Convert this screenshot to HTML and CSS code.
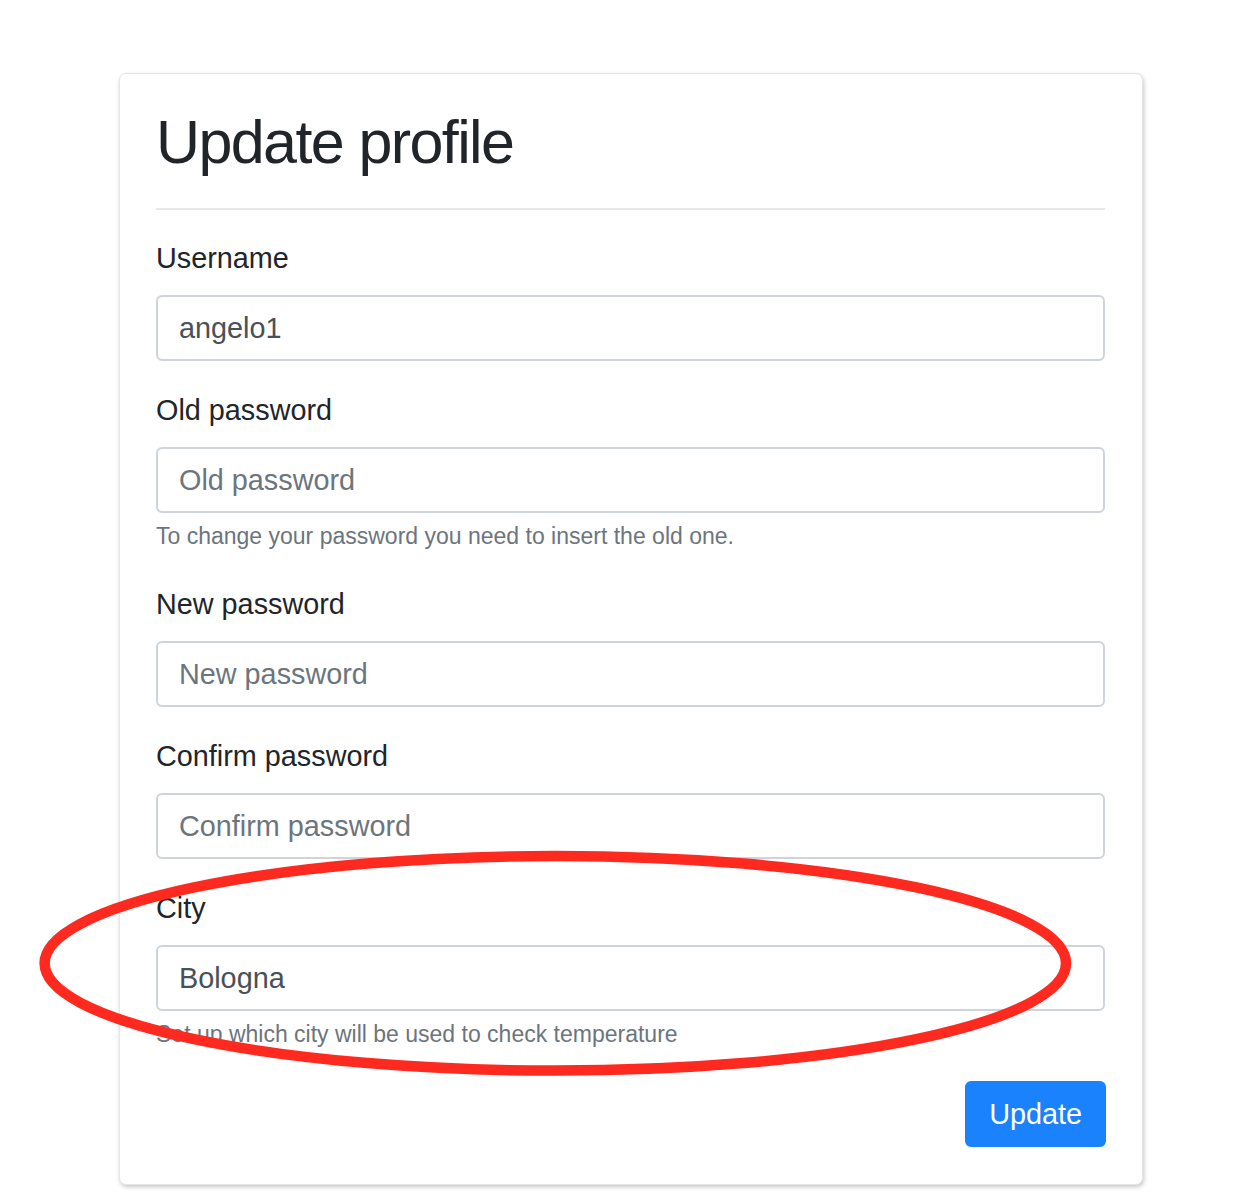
FILE: index.html
```html
<!DOCTYPE html>
<html lang="en">
<head>
<meta charset="utf-8">
<title>Update profile</title>
<link rel="stylesheet" href="styles.css">
</head>
<body>
<div class="page">
  <div class="card">
    <h1 class="title">Update profile</h1>
    <hr class="divider">
    <form class="form">
      <div class="group">
        <label class="label" for="username">Username</label>
        <input class="control" id="username" type="text" value="angelo1">
      </div>
      <div class="group">
        <label class="label" for="oldpw">Old password</label>
        <input class="control" id="oldpw" type="password" placeholder="Old password">
        <small class="help">To change your password you need to insert the old one.</small>
      </div>
      <div class="group">
        <label class="label" for="newpw">New password</label>
        <input class="control" id="newpw" type="password" placeholder="New password">
      </div>
      <div class="group">
        <label class="label" for="confpw">Confirm password</label>
        <input class="control" id="confpw" type="password" placeholder="Confirm password">
      </div>
      <div class="group">
        <label class="label" for="city">City</label>
        <input class="control" id="city" type="text" value="Bologna">
        <small class="help">Set up which city will be used to check temperature</small>
      </div>
      <div class="actions">
        <button class="btn" type="button">Update</button>
      </div>
    </form>
  </div>
  <svg class="annotation" width="1254" height="1202" viewBox="0 0 1254 1202" aria-hidden="true">
    <ellipse cx="555.3" cy="963.3" rx="510.7" ry="107.3" fill="none" stroke="#fe2a20" stroke-width="10.5"/>
  </svg>
</div>
</body>
</html>
```

FILE: styles.css
```css
html, body {
  margin: 0;
  padding: 0;
  background: #ffffff;
}

body {
  font-family: "Liberation Sans", Arial, Helvetica, sans-serif;
  color: #212529;
}

.page {
  position: relative;
  width: 1254px;
  height: 1202px;
  padding: 73px 0 0 119px;
  box-sizing: border-box;
}

.card {
  width: 1024px;
  box-sizing: border-box;
  border: 1px solid #e6e6e6;
  border-radius: 7px;
  box-shadow: 1px 2px 4px rgba(0, 0, 0, 0.22);
  padding: 36px 37px 37px 36px;
  background: #fff;
}

.title {
  margin: 0;
  font-size: 61px;
  line-height: 64px;
  font-weight: 400;
  letter-spacing: -1.6px;
  color: #212529;
}

.divider {
  margin: 34px 0 27px 0;
  border: 0;
  border-top: 2px solid #e7e7e7;
  height: 0;
}

.form {
  margin: 0;
}

.group {
  display: flex;
  flex-direction: column;
  margin-bottom: 28px;
}

.label {
  display: block;
  font-size: 28.8px;
  line-height: 42px;
  margin-bottom: 16px;
  color: #212529;
}

.control {
  display: block;
  width: 100%;
  height: 66px;
  box-sizing: border-box;
  border: 2px solid #ced4da;
  border-radius: 6px;
  padding: 0 21px;
  font-family: "Liberation Sans", Arial, Helvetica, sans-serif;
  font-size: 28.8px;
  color: #495057;
  background: #fff;
  outline: none;
}

.control::placeholder {
  color: #6c757d;
  opacity: 1;
}

.help {
  display: block;
  margin-top: 6px;
  margin-bottom: 2px;
  font-size: 23px;
  line-height: 34px;
  color: #6c757d;
}

.actions {
  display: flex;
  justify-content: flex-end;
  margin-top: 3px;
  margin-right: -1px;
}

.btn {
  height: 66px;
  padding: 0 22px;
  border: 2px solid #1b82fe;
  border-radius: 6px;
  background: #1b82fe;
  color: #fff;
  font-family: "Liberation Sans", Arial, Helvetica, sans-serif;
  font-size: 28.8px;
  line-height: 42px;
  cursor: pointer;
}

.annotation {
  position: absolute;
  left: 0;
  top: 0;
  pointer-events: none;
}
```
